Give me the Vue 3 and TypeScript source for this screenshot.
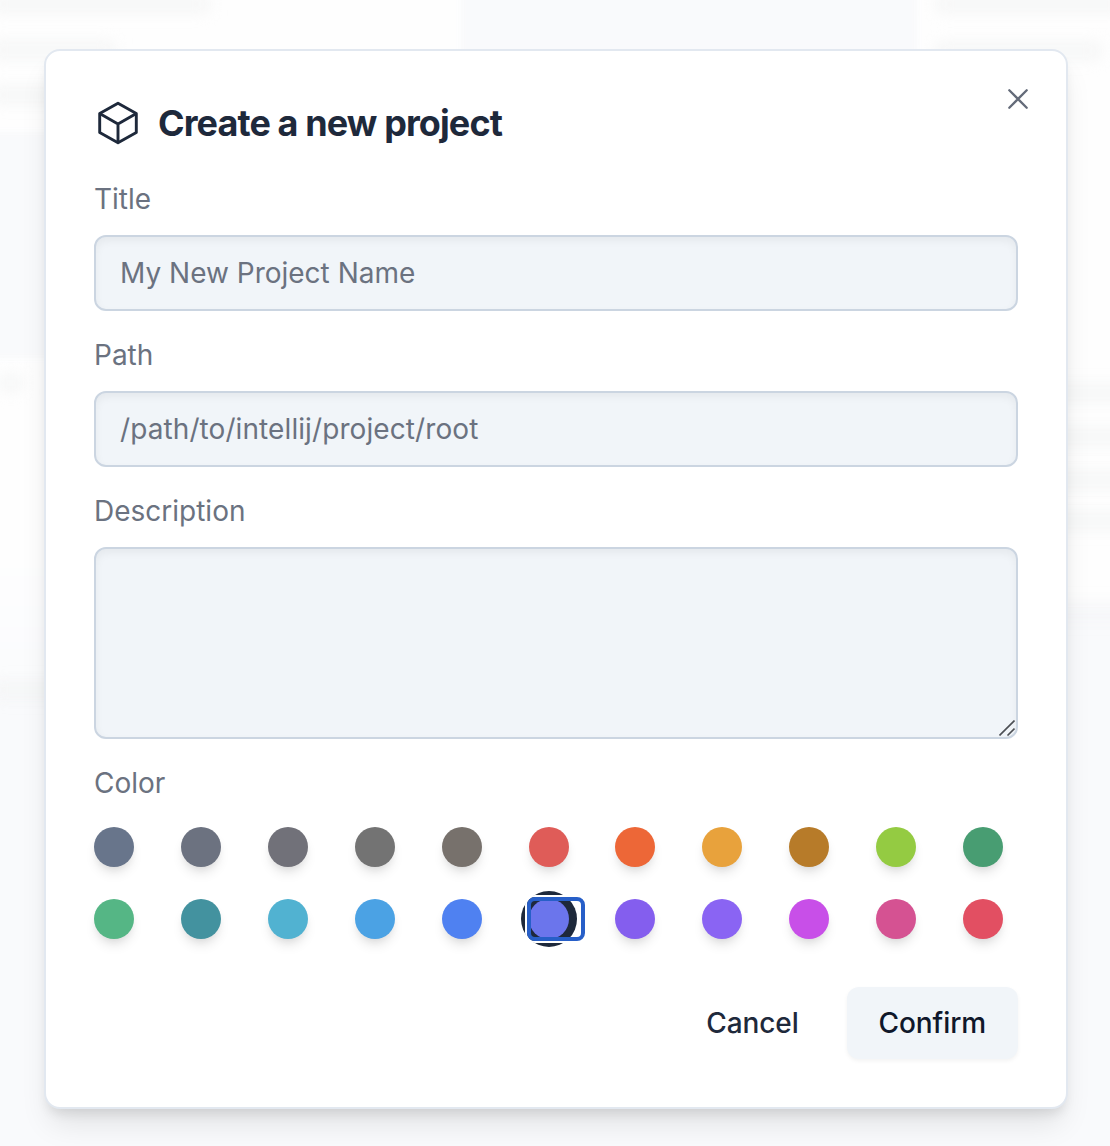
<script setup lang="ts">
import { ref } from 'vue'

const colors: string[] = [
  '#68758b', '#6c7280', '#717179', '#737373', '#77716c', '#df5c58',
  '#ed6737', '#e8a23c', '#b77b29', '#94cb42', '#489d72',
  '#55b685', '#43929f', '#51b2d1', '#4ba2e4', '#4f81f1', '#6b75ec',
  '#845eee', '#8a64f3', '#c84fe8', '#d55292', '#e24f62',
]
const selected = ref(16)
const title = ref('')
const path = ref('')
const description = ref('')
</script>

<template>
  <div class="screen">
    <div class="backdrop" aria-hidden="true">
      <i class="panel top-left"></i>
      <i class="panel top-right"></i>
      <i class="panel low-left"></i>
      <i class="smudge s1"></i><i class="smudge s2"></i><i class="smudge s3"></i>
      <i class="smudge s4"></i><i class="smudge s5"></i><i class="smudge s6"></i>
      <i class="smudge s7"></i><i class="smudge s8"></i><i class="smudge s9"></i>
      <i class="smudge s10"></i><i class="smudge s11"></i><i class="smudge s12"></i>
    </div>
    <form class="dialog" role="dialog" @submit.prevent>
      <button class="close" type="button" aria-label="Close">
        <svg width="20" height="20" viewBox="0 0 20 20" fill="none" stroke="#646b79" stroke-width="2.3" stroke-linecap="round">
          <path d="M1.3 1.3 18.7 18.7M18.7 1.3 1.3 18.7" />
        </svg>
      </button>
      <header class="heading">
        <svg width="48" height="48" viewBox="0 0 48 48" fill="none" stroke="#1e293b" stroke-width="2.9" stroke-linejoin="round">
          <path d="M24 4.2 42.3 14.5V33.5L24 43.8 5.7 33.5V14.5Z" />
          <path d="M5.7 14.5 24 25 42.3 14.5M24 25V43.8" />
        </svg>
        <h2>Create a new project</h2>
      </header>
      <label class="field">
        <span>Title</span>
        <input v-model="title" class="box" type="text" placeholder="My New Project Name" />
      </label>
      <label class="field">
        <span>Path</span>
        <input v-model="path" class="box path" type="text" placeholder="/path/to/intellij/project/root" />
      </label>
      <label class="field">
        <span>Description</span>
        <span class="area">
          <textarea v-model="description" class="box"></textarea>
          <svg class="grip" width="16" height="16" viewBox="0 0 16 16" fill="none" stroke="#4c4f54" stroke-width="1.6">
            <path d="M0.5 15.5 15.5 0.5M8.5 15.5 15.5 8.5" />
          </svg>
        </span>
      </label>
      <div class="field">
        <span>Color</span>
        <div class="swatches">
          <div v-for="(color, i) in colors" :key="color" class="cell" @click="selected = i">
            <span class="dot" :class="{ active: i === selected }" :style="{ backgroundColor: color }"></span>
            <span v-if="i === selected" class="focus"></span>
          </div>
        </div>
      </div>
      <footer class="actions">
        <button class="cancel" type="button">Cancel</button>
        <button class="confirm" type="submit">Confirm</button>
      </footer>
    </form>
  </div>
</template>

<style>
body { margin: 0; background: #f9fafc; }
</style>

<style scoped>
* { box-sizing: border-box; }
.screen {
  position: relative;
  width: 1110px;
  height: 1146px;
  padding: 49px 0 0 44px;
  overflow: hidden;
  background: #f9fafc;
  font-family: Inter, "Liberation Sans", sans-serif;
}
.backdrop { position: absolute; inset: 0; overflow: hidden; }
.panel, .smudge { position: absolute; display: block; }
.panel { background: #fefefe; filter: blur(5px); }
.top-left { left: -20px; top: -20px; width: 481px; height: 152px; }
.top-right { left: 917px; top: -20px; width: 220px; height: 630px; }
.low-left { left: -20px; top: 358px; width: 400px; height: 335px; background: linear-gradient(#fefefe 55%, #fafbfd); }
.smudge { height: 14px; background: #f4f5f5; filter: blur(8px); }
.s1 { left: -10px; top: -3px; width: 220px; }
.s2 { left: -10px; top: 43px; width: 125px; }
.s3 { left: -10px; top: 88px; width: 100px; }
.s4 { left: 936px; top: -3px; width: 190px; }
.s5 { left: 936px; top: 44px; width: 165px; }
.s6 { left: 0; top: 376px; width: 22px; }
.s7 { left: 1040px; top: 386px; width: 90px; }
.s8 { left: 1040px; top: 430px; width: 90px; }
.s9 { left: 1040px; top: 473px; width: 90px; }
.s10 { left: 1040px; top: 514px; width: 90px; }
.s11 { left: -10px; top: 683px; width: 90px; }
.s12 { left: 1040px; top: 604px; width: 90px; background: #f5f6f8; }
.dialog {
  position: relative;
  display: flex;
  flex-direction: column;
  width: 1024px;
  height: 1060px;
  padding: 48px;
  border: 2px solid #e2e8f0;
  border-radius: 16px;
  background: #fff;
  box-shadow: 0 20px 30px -6px rgba(0, 0, 0, .1), 0 8px 12px -4px rgba(0, 0, 0, .1);
}
.close {
  position: absolute;
  top: 38px;
  right: 38px;
  padding: 0;
  border: 0;
  background: none;
  line-height: 0;
}
.heading { display: flex; align-items: center; gap: 16px; height: 48px; }
h2 { margin: 0; font-size: 36px; line-height: 40px; font-weight: 650; letter-spacing: -.9px; color: #1e293b; white-space: nowrap; }
.field { display: flex; flex-direction: column; font-size: 28px; color: #6b7280; }
.field > span:first-child { height: 40px; margin-top: 32px; line-height: 40px; }
.field + .field > span:first-child { margin-top: 24px; }
.box {
  display: block;
  width: 924px;
  height: 76px;
  margin: 16px 0 0;
  padding: 0 24px;
  border: 2px solid #cbd5e1;
  border-radius: 12px;
  outline: 0;
  background: #f1f5f9;
  box-shadow: inset 0 4px 8px rgba(0, 0, 0, .05);
  font: 400 28px/40px Inter, "Liberation Sans", sans-serif;
  color: #1e293b;
}
.box::placeholder { color: #6b7280; opacity: 1; }
.box.path { letter-spacing: .09px; }
.area { position: relative; display: block; }
textarea.box { height: 192px; resize: none; }
.grip { position: absolute; right: 3px; bottom: 3px; }
.swatches { display: grid; grid-template-columns: repeat(11, 1fr); gap: 32px; width: 924px; margin-top: 24px; }
.cell { position: relative; height: 40px; }
.dot {
  display: block;
  width: 40px;
  height: 40px;
  border-radius: 50%;
  box-shadow: 0 8px 12px -2px rgba(0, 0, 0, .1), 0 4px 8px -4px rgba(0, 0, 0, .1);
}
.dot.active { box-shadow: 0 0 0 8px #1e293b; }
.focus {
  position: absolute;
  top: -2px;
  left: -1.5px;
  width: 58px;
  height: 44px;
  border: 4px solid #275fc8;
  border-radius: 8px;
  box-shadow: 0 0 0 2px #fff;
}
.actions { display: flex; justify-content: flex-end; gap: 16px; margin-top: 48px; }
.actions button {
  height: 72px;
  padding: 0 32px;
  border: 0;
  border-radius: 12px;
  background: none;
  font: 500 28px/40px Inter, "Liberation Sans", sans-serif;
  letter-spacing: -.1px;
  color: #1e293b;
}
.actions .confirm { background: #f1f5f9; color: #0f172a; box-shadow: 0 2px 4px rgba(0, 0, 0, .05); }
</style>
